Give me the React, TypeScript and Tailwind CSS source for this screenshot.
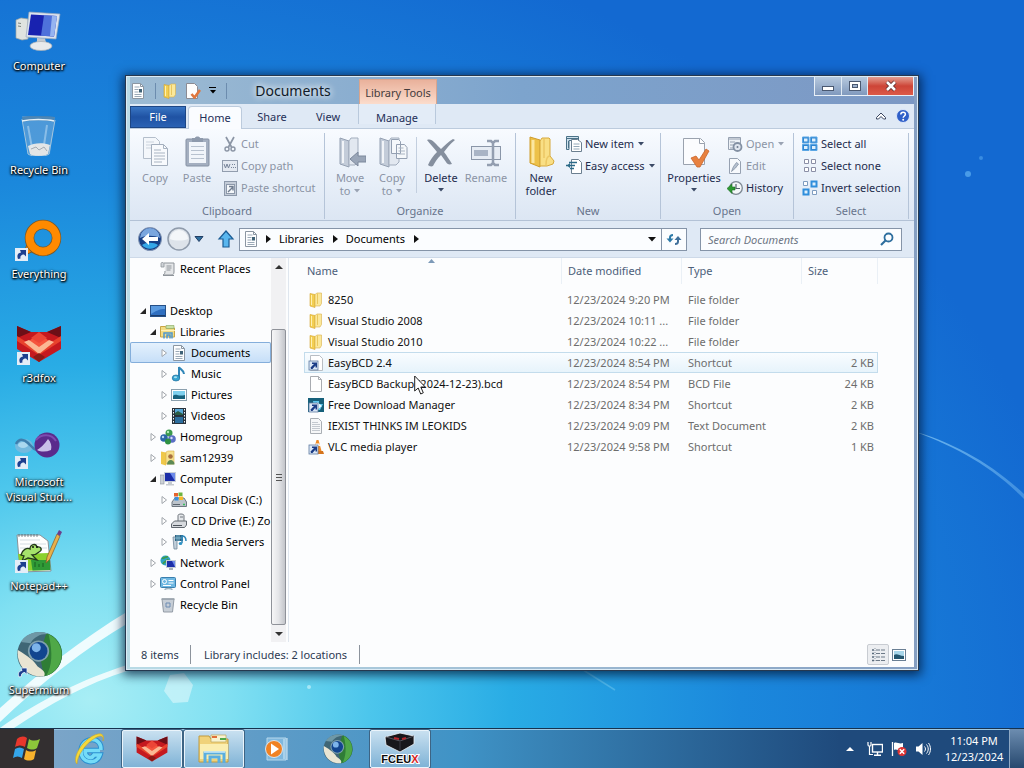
import type { ReactNode } from 'react';

/* ---------- small shared shapes ---------- */

function Svg({ box = 16, className = 'size-4', children }: { box?: number; className?: string; children: ReactNode }) {
  return (
    <svg viewBox={`0 0 ${box} ${box}`} className={`shrink-0 ${className}`} fill="none" aria-hidden="true">
      {children}
    </svg>
  );
}

function Caret({ className = 'text-[#3b4a66]' }: { className?: string }) {
  return (
    <svg viewBox="0 0 6 4" className={`inline-block w-[6px] h-1 shrink-0 ${className}`} aria-hidden="true">
      <path d="M0 0h6L3 3.5z" fill="currentColor" />
    </svg>
  );
}

function RightCaret() {
  return (
    <svg viewBox="0 0 5 8" className="w-[5px] h-2 shrink-0" aria-hidden="true">
      <path d="M0 0l5 4-5 4z" fill="#111" />
    </svg>
  );
}

/* ---------- 16px icons ---------- */

function DocIcon() {
  return (
    <Svg>
      <path d="M2.500.5h8l3 3v12h-11z" fill="#fdfeff" stroke="#8b96a2" />
      <path d="M10.500.5v3h3" stroke="#8b96a2" />
      <path d="M4.500 4h5M4.500 6.500h4M4.500 9h4M4.500 11.500h7M4.500 13.500h7" stroke="#9aa9b7" />
      <rect x="9" y="6" width="3" height="3.500" fill="#3f6277" />
    </Svg>
  );
}

function FolderIcon() {
  return (
    <Svg>
      <path d="M2 1.500l5 1v13l-5-1.500z" fill="#f3cf52" stroke="#d5a52f" strokeWidth=".6" />
      <path d="M7 2.500l2-1.500h4.500v10.500L12 14H7z" fill="#fbe89a" stroke="#d9b04a" strokeWidth=".6" />
      <path d="M9.500 1.500v10.500" stroke="#e9c75f" />
      <path d="M3.500 3v10" stroke="#fff0b0" />
    </Svg>
  );
}

function PageCheckIcon() {
  return (
    <Svg>
      <path d="M1.500.5h8l3 3v12h-11z" fill="#fdfdfd" stroke="#8b8b93" />
      <path d="M6.500 11l3 3.500L15 7" stroke="#e0763c" strokeWidth="2.600" />
    </Svg>
  );
}

function ShortcutBadge() {
  return (
    <>
      <rect x="1" y="6" width="9" height="9" fill="#dbe7f5" stroke="#5f7ba0" strokeWidth=".8" />
      <path d="M3 14l-.500-1.500L6 9H4V7.500h5v5H7.500v-2L4.500 14z" fill="#1b3c86" />
    </>
  );
}

function EasyBcdIcon() {
  return (
    <Svg>
      <path d="M2.500.5h9l3 3v12h-12z" fill="#fff" stroke="#b9bec4" />
      <ShortcutBadge />
    </Svg>
  );
}

function BlankFileIcon() {
  return (
    <Svg>
      <path d="M2.500.5h8l3 3v12h-11z" fill="#fff" stroke="#a9acb1" />
      <path d="M10.500.5v3h3" stroke="#a9acb1" />
    </Svg>
  );
}

function FdmIcon() {
  return (
    <Svg>
      <rect y="1" width="16" height="14" fill="#16607a" />
      <path d="M5 4h6v3h4l-3 6H6z" fill="#5cc7ec" />
      <path d="M9 5l5 4-5 4z" fill="#eafaff" />
      <ShortcutBadge />
    </Svg>
  );
}

function TextFileIcon() {
  return (
    <Svg>
      <path d="M2.500.5h8l3 3v12h-11z" fill="#f6f7f8" stroke="#a9aeb4" />
      <path d="M4 4.500h6M4 6.500h8M4 8.500h8M4 10.500h8M4 12.500h8" stroke="#c4c9cf" />
    </Svg>
  );
}

function VlcIcon() {
  return (
    <Svg>
      <path d="M8.500 1h2l3 11h-8z" fill="#f08a24" />
      <path d="M7.800 4.500h3.500l.8 2.500H7z" fill="#fff" />
      <path d="M4 12h11l1 3H3z" fill="#d5741d" />
      <ShortcutBadge />
    </Svg>
  );
}

function RecentIcon() {
  return (
    <Svg>
      <path d="M4 2h10v9c0 2-1 3-3 3H3c1.500-.5 2-2 2-4" fill="#e4e6e8" stroke="#8e949a" />
      <path d="M1 2.500C1 1 4 1 4 3v3H1z" fill="#cfd3d7" stroke="#8e949a" strokeWidth=".8" />
      <path d="M6.500 5h5M6.500 7h5M6.500 9h4M3 14.500h11" stroke="#8e949a" />
    </Svg>
  );
}

function DesktopIcon() {
  return (
    <Svg>
      <rect x=".5" y="2.500" width="15" height="11" fill="#2f6fc0" stroke="#254f86" />
      <path d="M1 3h14v3c-6 0-9 2-14 5z" fill="#5b9be0" />
      <path d="M1 12.500h14" stroke="#1b3d6d" />
    </Svg>
  );
}

function LibrariesIcon() {
  return (
    <Svg>
      <path d="M.5 2.500h5l1 1.500h8v9H.5z" fill="#f3dc83" stroke="#c9a545" />
      <path d="M6 1.500h8v3H6z" fill="#c8e1a8" stroke="#86a45b" strokeWidth=".6" />
      <path d="M1 6.500h14" stroke="#fff2b8" />
      <path d="M4 14.500V9h8v5.500M7 14.500V11h3v3.500" stroke="#4e97cf" strokeWidth="1.500" />
    </Svg>
  );
}

function MusicIcon() {
  return (
    <Svg>
      <path d="M8 12V1c1 2.500 5 3 5 7" stroke="#2f86b8" strokeWidth="2" />
      <ellipse cx="5" cy="12" rx="3.800" ry="3" fill="#37a3d0" stroke="#1d6f9e" strokeWidth=".7" />
      <ellipse cx="4.500" cy="11.300" rx="1.600" ry="1" fill="#a5e2f4" />
    </Svg>
  );
}

function PictureIcon() {
  return (
    <Svg>
      <rect x=".5" y="2.500" width="15" height="11" fill="#fff" stroke="#8ba0ae" />
      <rect x="2" y="4" width="12" height="8" fill="#7fd0ee" />
      <path d="M2 9c3-3 5 1 12-1v4H2z" fill="#17627d" />
    </Svg>
  );
}

function VideoIcon() {
  return (
    <Svg>
      <rect x="1" width="14" height="16" fill="#28323c" />
      <rect x="4" y="1" width="8" height="6" fill="#58a8d6" />
      <rect x="4" y="9" width="8" height="6" fill="#2d6e9e" />
      <path d="M4 5l3-2 5 3v1H4z" fill="#2b5d45" />
      <path d="M2.500 1v15M13.500 1v15" stroke="#f1f5f8" strokeDasharray="1.500 1.500" />
    </Svg>
  );
}

function HomegroupIcon() {
  return (
    <Svg>
      <circle cx="9" cy="4" r="3.500" fill="#3c9a4e" />
      <circle cx="4" cy="9" r="3.800" fill="#2b66a8" />
      <circle cx="12" cy="10" r="3.800" fill="#5a6fc4" />
      <circle cx="8" cy="12.500" r="3" fill="#2e9142" />
      <circle cx="8" cy="3" r="1.200" fill="#b4ecb8" />
      <circle cx="3" cy="8" r="1.200" fill="#b3d8f4" />
      <circle cx="11.500" cy="9" r="1.200" fill="#d8dcfa" />
    </Svg>
  );
}

function UserIcon() {
  return (
    <Svg>
      <path d="M1 1.500l5 1v13L1 14z" fill="#efc84a" />
      <path d="M6 2l2-1h6v13H6z" fill="#f7e28f" stroke="#d9b04a" strokeWidth=".6" />
      <circle cx="10.500" cy="6.500" r="2.300" fill="#a8703f" />
      <path d="M7 14.500c0-6 7.500-6 7.500 0z" fill="#5d8a54" />
    </Svg>
  );
}

function SmallComputerIcon() {
  return (
    <Svg>
      <rect x="0" y="4" width="4" height="9" fill="#cbd0d6" stroke="#8a929b" strokeWidth=".6" />
      <rect x="4.500" y="1.500" width="11" height="9" fill="#1c2ea8" stroke="#c9d0da" />
      <path d="M10 2h5v8z" fill="#6e8bea" />
      <path d="M8 11h4v2h2v1.500H6V13h2z" fill="#c5cad0" />
    </Svg>
  );
}

function DiskIcon() {
  return (
    <Svg>
      <path d="M1 10l3-4h9l2.500 4v4.500H1z" fill="#bcc3ca" stroke="#6f7881" />
      <rect x="3" y="1" width="4" height="3.500" fill="#e6632d" />
      <rect x="7.500" y=".5" width="4" height="3.500" fill="#6cb33f" />
      <rect x="3.500" y="5" width="4" height="3.500" fill="#3c8fd9" />
      <rect x="8" y="4.500" width="4" height="3.500" fill="#f5b829" />
      <path d="M2 12.500h7" stroke="#5b646d" />
      <path d="M12 12.500h2" stroke="#36c05c" strokeWidth="1.500" />
    </Svg>
  );
}

function CdDriveIcon() {
  return (
    <Svg>
      <path d="M7 9V2.500C7 .5 13 .5 13 2.500V9" fill="#e4e7ea" stroke="#70777e" />
      <path d="M9 4h3" stroke="#70777e" />
      <path d="M.5 11L3.500 8h12v4l-2 2.500H.5z" fill="#d6d9dd" stroke="#61686f" />
      <path d="M2 12.500h9" stroke="#4c535a" />
    </Svg>
  );
}

function MediaServerIcon() {
  return (
    <Svg>
      <path d="M2 3h4v12H3z" fill="#c1cfda" stroke="#72889a" strokeWidth=".8" />
      <path d="M4 1h8v6H4z" fill="#2d6383" />
      <path d="M6 1v6M8 1v6M4 4h8" stroke="#9ed2e6" strokeWidth=".7" />
      <path d="M11 9V2c3 0 4 2 4 5" stroke="#2f86b8" strokeWidth="1.500" />
      <ellipse cx="9.500" cy="9.500" rx="1.800" ry="1.500" fill="#2f93c5" />
    </Svg>
  );
}

function NetworkIcon() {
  return (
    <Svg>
      <circle cx="5.500" cy="5.500" r="5" fill="#2fa3c4" />
      <path d="M2 3c3 1 3-2 6-1M3 9c1-3 4-2 5-5" stroke="#3f9b4a" strokeWidth="1.800" />
      <rect x="6.500" y="5.500" width="9" height="7" fill="#1c2ea8" stroke="#c3ccd6" />
      <path d="M12 6h3v6z" fill="#6e8bea" />
      <path d="M9 13h4v2H9z" fill="#aab2ba" />
    </Svg>
  );
}

function ControlPanelIcon() {
  return (
    <Svg>
      <rect x=".5" y="1.500" width="15" height="10" rx="1" fill="#6fb8e2" stroke="#3a7fae" />
      <circle cx="4.500" cy="5.500" r="2" stroke="#fff" />
      <path d="M8.500 4.500h5M8.500 7h5M3 9.500h8" stroke="#fff" />
      <path d="M5 14c0-2 7-2 7 0" stroke="#9fb4c2" strokeWidth="1.500" />
    </Svg>
  );
}

function SmallBinIcon() {
  return (
    <Svg>
      <path d="M2 2h12l-1.500 13h-9z" fill="#c7ced6" stroke="#939ca6" />
      <path d="M1.500 2h13" stroke="#9aa3ac" strokeWidth="1.500" />
      <path d="M6 6h4v4H6z" stroke="#6c8cb4" />
    </Svg>
  );
}

/* ---------- ribbon icons ---------- */

function CopyIcon() {
  return (
    <Svg box={32} className="size-8">
      <path d="M4.500 1.500h12l4 4v17h-16z" fill="#f4f7fb" stroke="#b4becb" />
      <path d="M7 6h8M7 9h10M7 12h6" stroke="#cbd3dd" />
      <path d="M12.500 8.500h12l4 4v17h-16z" fill="#f8fafd" stroke="#a3aebd" />
      <path d="M24.500 8.500v4h4M15 14h7M15 17h11M15 20h11M15 23h11M15 26h8" stroke="#a9b4c2" />
    </Svg>
  );
}

function PasteIcon() {
  return (
    <Svg box={32} className="size-8">
      <rect x="5" y="3" width="23" height="27" rx="1" fill="#a4afc0" stroke="#8591a4" />
      <rect x="8" y="6" width="17" height="21" fill="#f1f5fa" />
      <path d="M10 10.500h13M10 14.500h13M10 18.500h13M10 22.500h13" stroke="#b8c2cf" />
      <path d="M11 2h3c0-2 5-2 5 0h3v4H11z" fill="#8e9aac" />
    </Svg>
  );
}

function CutIcon() {
  return (
    <Svg>
      <path d="M4 1l5.500 10M12 1L6.500 11" stroke="#8b95a5" strokeWidth="1.700" />
      <circle cx="5" cy="13" r="2" stroke="#8b95a5" strokeWidth="1.400" />
      <circle cx="11" cy="13" r="2" stroke="#8b95a5" strokeWidth="1.400" />
    </Svg>
  );
}

function CopyPathIcon() {
  return (
    <Svg>
      <rect x=".5" y="2.500" width="15" height="11" fill="#e4e9f1" stroke="#929dae" />
      <path d="M2 6l1.500 4L5 6l1.500 4L8 6" stroke="#78859a" />
      <path d="M9 9.500h5M10 6.500h4" stroke="#78859a" strokeDasharray="1 1" />
    </Svg>
  );
}

function PasteShortcutIcon() {
  return (
    <Svg>
      <rect x="2.500" y="1.500" width="12" height="14" fill="#c4ccd8" stroke="#8c98aa" />
      <rect x="4.500" y="4.500" width="8" height="9" fill="#f4f7fa" stroke="#8c98aa" />
      <path d="M6 12l4.500-4.500M7 6.500h4v4" stroke="#6f7c90" strokeWidth="1.400" />
    </Svg>
  );
}

function MoveToIcon() {
  return (
    <Svg box={32} className="size-8">
      <path d="M6 2l9 3v26l-9-3z" fill="#c3ccd9" stroke="#94a0b2" />
      <path d="M15 5l2-3h7v24l-3 3h-6z" fill="#e2e8f0" stroke="#a2adbd" />
      <path d="M9 5v22" stroke="#f1f4f8" strokeWidth="2" />
      <path d="M16 23l8-7v4h8v6h-8v4z" fill="#9aa6b8" stroke="#7d899c" />
    </Svg>
  );
}

function CopyToIcon() {
  return (
    <Svg box={32} className="size-8">
      <path d="M4 2l9 3v26l-9-3z" fill="#c3ccd9" stroke="#94a0b2" />
      <path d="M13 5l2-3h8v24l-3 3h-7z" fill="#e2e8f0" stroke="#a2adbd" />
      <path d="M7 5v22" stroke="#f1f4f8" strokeWidth="2" />
      <path d="M15.500 3.500h7l2 2v12h-9zM20.500 8.500h8l2.500 3v11H20.500z" fill="#f5f8fb" stroke="#94a0b2" />
      <path d="M22.500 12h5M22.500 15h6.500M22.500 18h6.500" stroke="#a9b4c2" />
    </Svg>
  );
}

function DeleteIcon() {
  return (
    <Svg box={32} className="size-8">
      <path d="M2 4c3-1 5 0 7 2 3 3 5 5 7 7 4-4 7-7 12-10l2 1c-5 4-8 8-11 12 3 4 5 7 8 12-3 1-5 0-6-2l-5-7c-4 4-6 7-8 11-2 1-4 0-5-1 2-5 5-9 9-13C9 12 5 8 2 4z" fill="#858f9e" />
    </Svg>
  );
}

function RenameIcon() {
  return (
    <Svg box={32} className="size-8">
      <rect x="1.500" y="10.500" width="29" height="13" fill="#e6ecf4" stroke="#8a96a8" />
      <rect x="4" y="14" width="14" height="6" fill="#a9b4c5" />
      <path d="M17 5h4l2 2 2-2h4M23 7v20M17 29h4l2-2 2 2h4" stroke="#939eb0" strokeWidth="2.500" />
    </Svg>
  );
}

function NewFolderIcon() {
  return (
    <Svg box={32} className="size-8">
      <path d="M5 1l10 3v27L5 27z" fill="#edc149" stroke="#cf9c2c" />
      <path d="M8 4v23" stroke="#fbe6a0" strokeWidth="3" />
      <path d="M15 5l2-3h7l1 1v17l4 5-1 3-6 2h-7z" fill="#f9df85" stroke="#d6a83c" />
      <path d="M19 3v19M25 20c-3 0-4 3-4 9" stroke="#ecc865" strokeWidth="1.500" />
    </Svg>
  );
}

function NewItemIcon() {
  return (
    <Svg>
      <path d="M.5.500h12v4H3v9H.5z" fill="#cfe2ee" stroke="#4a7288" />
      <path d="M1 2.500h11M2.500 5v7" stroke="#4a7288" />
      <path d="M5.500 3.500h6l4 3v9h-10z" fill="#fff" stroke="#6b7f90" />
      <path d="M7.500 8h6M7.500 10.500h6M7.500 13h6" stroke="#93a8b8" />
    </Svg>
  );
}

function EasyAccessIcon() {
  return (
    <Svg>
      <path d="M5.500 1.500h7l3 3v11h-10z" fill="#fff" stroke="#6b7f90" />
      <path d="M0 7.500h9M3 4.500h8M4 10.500h4" stroke="#2c6b88" strokeWidth="1.300" />
      <path d="M1 7.500l3-2.500v5z" fill="#2c6b88" />
    </Svg>
  );
}

function PropertiesIcon() {
  return (
    <Svg box={32} className="size-8">
      <path d="M5.500 2.500h17l4 4v22h-21z" fill="#fbfcfe" stroke="#9aa2ae" />
      <path d="M21.500 2.500v5h5" fill="#fff" stroke="#9aa2ae" />
      <path d="M13 22l5-2 3 4 7-11 3 2-9 16h-3z" fill="#e8813f" stroke="#c9642a" strokeWidth=".8" />
    </Svg>
  );
}

function OpenIcon() {
  return (
    <Svg>
      <path d="M1.500 1.500h12v12h-12z" fill="#edf1f6" stroke="#96a1b1" />
      <path d="M1 3h13M3 6h5M3 9h4M3 12h4" stroke="#96a1b1" />
      <circle cx="10.500" cy="11" r="4" fill="#dfe5ee" stroke="#8390a3" strokeWidth="1.800" />
      <circle cx="10.500" cy="11" r="1" fill="#6e7b8e" />
    </Svg>
  );
}

function EditIcon() {
  return (
    <Svg>
      <path d="M2.500.5h8l3 3v12h-11z" fill="#f7f9fc" stroke="#96a1b1" />
      <path d="M4.500 13.500l2-5 3-4 2 1.500-3 4z" fill="#b8c2d0" stroke="#8390a3" strokeWidth=".8" />
    </Svg>
  );
}

function HistoryIcon() {
  return (
    <Svg>
      <circle cx="9" cy="8" r="6.300" fill="#f4f7f9" stroke="#7d8893" strokeWidth="1.300" />
      <path d="M9 4v4.500h4" stroke="#55606c" strokeWidth="1.200" />
      <path d="M0 8.500L5 4v3h3v3H5v3.500z" fill="#2e9a33" stroke="#1c6d22" strokeWidth=".6" />
    </Svg>
  );
}

function SelectAllIcon() {
  return (
    <Svg>
      <path d="M.5 1h6.500v6H.5zM8.500 1H15v6H8.500zM.5 8.500H7v6H.5zM8.500 8.500H15v6H8.500z" fill="#2f86d2" stroke="#5ba6e4" />
      <path d="M2 2.500h3.500v3H2zM10 2.500h3.500v3H10zM2 10h3.500v3H2zM10 10h3.500v3H10z" fill="#dff0fc" />
    </Svg>
  );
}

function SelectNoneIcon() {
  return (
    <Svg>
      <path d="M2.500 1.500h4v4h-4zM9.500 1.500h4v4h-4zM2.500 9.500h4v4h-4zM9.500 9.500h4v4h-4z" fill="#fff" stroke="#8b8fa6" />
    </Svg>
  );
}

function InvertIcon() {
  return (
    <Svg>
      <path d="M1.500 1.500h4v4h-4zM10.500 10.500h4v4h-4z" fill="#fff" stroke="#7f9cc0" />
      <path d="M8.500.5h7v7h-7zM.5 8.500h7v7h-7z" fill="#2f8edc" />
      <path d="M10.500 2.500h3v3h-3zM2.500 10.500h3v3h-3z" fill="#dff0fc" />
    </Svg>
  );
}

/* ---------- big desktop icons ---------- */

function BigShortcut() {
  return (
    <>
      <rect x="-4" y="28" width="13" height="13" fill="#e4edf7" />
      <path d="M-1 39c-1.500-4 0-6 3-6.500L1 30l6 0 0 6.500-2-2c-3 0-4 2-3.500 4z" fill="#1d3f8f" />
    </>
  );
}

function ComputerBig() {
  return (
    <Svg box={40} className="size-10 overflow-visible">
      <path d="M-3 8l5-2 7 1v20l-6 1-6-2z" fill="#dfe3e0" stroke="#9fa6a3" strokeWidth=".7" />
      <path d="M-1 11l3 .5M-1 14l3 .5" stroke="#7b8580" />
      <path d="M10 0l31 2-4 25-30-2z" fill="#dbe3ee" stroke="#98a6ba" strokeWidth=".7" />
      <path d="M12 2.500l26 1.500-3 20.500-26-1.500z" fill="#1822b0" />
      <path d="M25 3.300L38 4l-3 20.500-13-.8z" fill="#5c86e6" opacity=".8" />
      <path d="M33 4l5 .2-3 20-4-.3z" fill="#b5d2fa" opacity=".7" />
      <path d="M18 26l8 .5 1 4h-9z" fill="#c2c8cf" />
      <ellipse cx="22" cy="34" rx="11" ry="4.500" fill="#e8eaec" stroke="#a7adb3" strokeWidth=".7" />
    </Svg>
  );
}

function BinBig() {
  return (
    <Svg box={40} className="size-10">
      <path d="M3 0L9 38c4 3 18 3 22 0l5-37z" fill="#8fb6d6" opacity=".45" />
      <path d="M9 30c5-3 15-4 22-1l-2 9c-5 3-14 3-18 0z" fill="#e3e5e6" />
      <path d="M12 33l5-2 3 3 5-3 3 4" stroke="#a4abb2" />
      <path d="M3 3l6 35c4 3 17 3 21 0l6-34" stroke="#a5c6dd" />
      <path d="M3 1c9-2 23-2 33 0-1 3-1 4-1 5C26 4 12 4 4 6z" fill="#4f7fa6" fillOpacity=".7" />
      <path d="M3 5c9-2 24-2 32 0" stroke="#e6f2fa" strokeWidth="1.500" />
      <path d="M9 10l4 22M28 9l-3 20" stroke="#e4f3fd" opacity=".4" strokeWidth="2" />
    </Svg>
  );
}

function EverythingBig() {
  return (
    <Svg box={40} className="size-10 overflow-visible">
      <path d="M8 24l-4 12 11-5z" fill="#ff8a00" stroke="#7b5a2a" />
      <circle cx="24" cy="18" r="13.500" stroke="#7b5a2a" strokeWidth="9.500" />
      <circle cx="24" cy="18" r="13.500" stroke="#ff8a00" strokeWidth="8" />
      <BigShortcut />
    </Svg>
  );
}

function FoxShape() {
  return (
    <>
      <path d="M0 2l14 6h16l14-6v23L22 38 0 25z" fill="#c5191f" />
      <path d="M0 2l14 6L0 14zM44 2L30 8l14 6z" fill="#6d0f17" />
      <path d="M0 12l22 14 22-14v5L22 31 0 17z" fill="#e8422c" />
      <path d="M12 17l10-8 10 8-10 9z" fill="#f5543d" />
      <path d="M7 18l5-2 10 7 10-7 5 2-15 12z" fill="#fbb894" />
      <path d="M14 14l8-6 8 6-8 5z" fill="#ec4537" />
      <path d="M16 33l6-4 6 4-6 5z" fill="#8c1a16" />
    </>
  );
}

function FoxBig() {
  return (
    <svg viewBox="-2 0 48 40" className="w-12 h-10 overflow-visible" fill="none" aria-hidden="true">
      <FoxShape />
      <g transform="translate(4 0)">
        <BigShortcut />
      </g>
    </svg>
  );
}

function VsBig() {
  return (
    <Svg box={40} className="size-10 overflow-visible">
      <ellipse cx="5" cy="18" rx="9" ry="7" fill="#7cb9dd" opacity=".85" />
      <ellipse cx="4" cy="17" rx="5" ry="3" fill="#b8e0f2" opacity=".8" />
      <path d="M-3 16c3-6 8-5 12-1s7 8 11 7" stroke="#3e7fae" strokeWidth="2.500" />
      <circle cx="28" cy="17" r="12.500" fill="#5a2b8c" />
      <path d="M18 22c3-2 8-6 11-11 3 3 4 7 3 11-5 2-10 2-14 0z" fill="#c9bfe8" />
      <path d="M17 12c5-6 15-7 20 1" stroke="#7d4cb0" strokeWidth="2" />
      <BigShortcut />
    </Svg>
  );
}

function NotepadBig() {
  return (
    <Svg box={40} className="size-10 overflow-visible">
      <path d="M-2 3h23l8 6 3 30-31 1z" fill="#fff" stroke="#8a9298" />
      <path d="M1 8h20M1 12h26M1 16h27" stroke="#d5dde3" />
      <path d="M0 2v3M3 2v3M6 2v3M9 2v3M12 2v3M15 2v3M18 2v3" stroke="#555d64" strokeWidth=".7" />
      <path d="M-1 22l31-1 1 17-29 1z" fill="#8bd12d" />
      <path d="M12 28h19l.5 10-18 .6z" fill="#2f9a36" />
      <path d="M2 23c1-5 6-8 9-6 0-5 6-6 7-2 4-1 6 3 2 5-2 2-4 3-7 3l5 5-9-2-6 3 2-5z" fill="#a6e36b" stroke="#253a1c" strokeWidth="1.300" />
      <circle cx="14" cy="15" r="1" fill="#111" />
      <circle cx="18" cy="15" r="1" fill="#111" />
      <path d="M16 35v-5M20 35v-3M24 35v-4" stroke="#195f20" />
      <path d="M38 2l3 2-10 23-4 4 1-6z" fill="#e8b04a" stroke="#8b5a25" strokeWidth=".7" />
      <path d="M38 2l2-4 3 2-2 4z" fill="#6b3f8c" />
      <BigShortcut />
    </Svg>
  );
}

function ChromiumShape() {
  return (
    <>
      <circle cx="22" cy="20" r="20" fill="#3f6675" />
      <path d="M22 20L28 .9A20 20 0 0 1 26 39.600z" fill="#2f7d36" />
      <path d="M30 2a20 20 0 0 1-2 37c5-9 6-20 2-37z" fill="#4fa848" />
      <path d="M2.500 16C1 30 12 41 26 39.600c2-4-2-6-6-9-3-5-8-9-17.500-14.600z" fill="#e9e5d3" />
      <path d="M5 9C11 0 22-2 31 2c-7-1-14 2-17 8z" fill="#6f98a6" />
      <circle cx="21" cy="17" r="9.500" fill="#7fa0ae" />
      <circle cx="21" cy="17" r="8" fill="#12458f" />
      <circle cx="19" cy="14" r="4" fill="#7db4ea" />
    </>
  );
}

function SupermiumBig() {
  return (
    <svg viewBox="-4 0 48 40" className="w-12 h-10 overflow-visible" fill="none" aria-hidden="true">
      <g transform="translate(-4 -4) scale(1.120)">
        <ChromiumShape />
      </g>
      <path d="M0 41c-1.500-4 0-6 3-6.500L2 32l6 0 0 6.500-2-2c-3 0-4 2-3.500 4z" fill="#1d3f8f" stroke="#eef4fb" strokeWidth=".8" />
    </svg>
  );
}

/* ---------- taskbar icons ---------- */

function StartLogo() {
  return (
    <Svg box={32} className="size-8">
      <path d="M6 6c4-3 7-3 10-1l-2 9c-3-2-6-2-10 0z" fill="#e8372c" />
      <path d="M18 6c3 2 7 2 11 0l-3 9c-3 2-6 2-10 0z" fill="#8cc63a" />
      <path d="M4 16c3-2 6-2 9 0l-2 9c-3-2-6-2-9 0z" fill="#35a6ea" />
      <path d="M15 17c3 2 7 2 10 0l-2 9c-3 2-7 2-10 0z" fill="#f8b22c" />
    </Svg>
  );
}

function IeLogo() {
  return (
    <Svg box={32} className="size-8">
      <path d="M26 17.500H9.500M27 17c1-14-19-14-20 1 0 13 16 14 19 4h-6c-3 5-9 2-9-4" stroke="#2b8fd0" strokeWidth="5.500" />
      <path d="M26 17.500H9.500M27 17c1-14-19-14-20 1 0 13 16 14 19 4h-6c-3 5-9 2-9-4" stroke="#74dbf7" strokeWidth="3.500" />
      <path d="M3 31C-3 25 10 4 24 1c6-1 6 4 5 7 1-6-3-6-8-3C11 11 3 23 3 31z" fill="#f5d93a" stroke="#caa52a" strokeWidth=".6" />
    </Svg>
  );
}

function FoxTask() {
  return (
    <svg viewBox="0 0 44 40" className="w-8 h-7" fill="none" aria-hidden="true">
      <FoxShape />
    </svg>
  );
}

function ExplorerTask() {
  return (
    <Svg box={32} className="size-8">
      <path d="M1 3h10l2 3h17v23H1z" fill="#f0d27a" stroke="#bf9a3f" />
      <path d="M13 2h15v7H13z" fill="#f8f3d0" stroke="#bfa757" strokeWidth=".7" />
      <path d="M14 4h5" stroke="#e0703a" strokeWidth="2" />
      <path d="M22 6h6" stroke="#4fa848" strokeWidth="2" />
      <path d="M2 11h28v15H2z" fill="#fbeeb0" />
      <path d="M7 30V20h19v10M12 30v-6h9v6" stroke="#5aaee0" strokeWidth="3" />
      <path d="M6 19h21" stroke="#cbeafa" strokeWidth="1.500" />
    </Svg>
  );
}

function PlayerTask() {
  return (
    <Svg box={32} className="size-8">
      <path d="M7 5h19v22H7z" fill="#7fb8de" stroke="#b7d8ec" />
      <path d="M24 6v20M27 5v22" stroke="#d5eaf7" />
      <circle cx="14" cy="16" r="8.500" fill="#f08223" stroke="#d9e6f0" />
      <path d="M11 10.500l8 5.500-8 5.500z" fill="#fff" />
    </Svg>
  );
}

function SupermiumTask() {
  return (
    <svg viewBox="0 -1 44 42" className="w-8 h-8" fill="none" aria-hidden="true">
      <ChromiumShape />
    </svg>
  );
}

function FceuxTask() {
  return (
    <svg viewBox="0 0 40 34" className="w-10 h-[34px]" aria-hidden="true">
      <path d="M5 5l15-4 14 3v8l-14 8-14-7z" fill="#17171b" stroke="#eef3f7" strokeWidth=".8" />
      <path d="M6 5l14 4 14-5" stroke="#55555d" fill="none" />
      <path d="M14 6l5 1M22 7l4-1" stroke="#b3262b" strokeWidth="2" />
      <path d="M20 10v8" stroke="#3b3b42" />
      <text x="20" y="31" textAnchor="middle" fontFamily="Liberation Sans, sans-serif" fontWeight="700" fontSize="11" fill="#0b0b0b" stroke="#fff" strokeWidth="2" paintOrder="stroke">
        FCEU<tspan fill="#d81f1f">X</tspan>
      </text>
    </svg>
  );
}

/* ---------- data ---------- */

const desktopItems = [
  { label: 'Computer', icon: <ComputerBig /> },
  { label: 'Recycle Bin', icon: <BinBig /> },
  { label: 'Everything', icon: <EverythingBig /> },
  { label: 'r3dfox', icon: <FoxBig /> },
  { label: 'Microsoft Visual Stud...', icon: <VsBig /> },
  { label: 'Notepad++', icon: <NotepadBig /> },
  { label: 'Supermium', icon: <SupermiumBig /> },
];

type NavItem = { label: string; level: 0 | 1 | 2; arrow?: 'open' | 'closed'; icon: ReactNode; selected?: boolean };

const navItems: NavItem[] = [
  { label: 'Desktop', level: 0, arrow: 'open', icon: <DesktopIcon /> },
  { label: 'Libraries', level: 1, arrow: 'open', icon: <LibrariesIcon /> },
  { label: 'Documents', level: 2, arrow: 'closed', icon: <DocIcon />, selected: true },
  { label: 'Music', level: 2, arrow: 'closed', icon: <MusicIcon /> },
  { label: 'Pictures', level: 2, arrow: 'closed', icon: <PictureIcon /> },
  { label: 'Videos', level: 2, arrow: 'closed', icon: <VideoIcon /> },
  { label: 'Homegroup', level: 1, arrow: 'closed', icon: <HomegroupIcon /> },
  { label: 'sam12939', level: 1, arrow: 'closed', icon: <UserIcon /> },
  { label: 'Computer', level: 1, arrow: 'open', icon: <SmallComputerIcon /> },
  { label: 'Local Disk (C:)', level: 2, arrow: 'closed', icon: <DiskIcon /> },
  { label: 'CD Drive (E:) Zo', level: 2, arrow: 'closed', icon: <CdDriveIcon /> },
  { label: 'Media Servers', level: 2, arrow: 'closed', icon: <MediaServerIcon /> },
  { label: 'Network', level: 1, arrow: 'closed', icon: <NetworkIcon /> },
  { label: 'Control Panel', level: 1, arrow: 'closed', icon: <ControlPanelIcon /> },
  { label: 'Recycle Bin', level: 1, icon: <SmallBinIcon /> },
];

const files = [
  { name: '8250', date: '12/23/2024 9:20 PM', type: 'File folder', size: '', icon: <FolderIcon /> },
  { name: 'Visual Studio 2008', date: '12/23/2024 10:11 ...', type: 'File folder', size: '', icon: <FolderIcon /> },
  { name: 'Visual Studio 2010', date: '12/23/2024 10:22 ...', type: 'File folder', size: '', icon: <FolderIcon /> },
  { name: 'EasyBCD 2.4', date: '12/23/2024 8:54 PM', type: 'Shortcut', size: '2 KB', icon: <EasyBcdIcon />, hover: true },
  { name: 'EasyBCD Backup (2024-12-23).bcd', date: '12/23/2024 8:54 PM', type: 'BCD File', size: '24 KB', icon: <BlankFileIcon /> },
  { name: 'Free Download Manager', date: '12/23/2024 8:34 PM', type: 'Shortcut', size: '2 KB', icon: <FdmIcon /> },
  { name: 'IEXIST THINKS IM LEOKIDS', date: '12/23/2024 9:09 PM', type: 'Text Document', size: '2 KB', icon: <TextFileIcon /> },
  { name: 'VLC media player', date: '12/23/2024 9:58 PM', type: 'Shortcut', size: '1 KB', icon: <VlcIcon /> },
];

const indent = ['pl-[9px]', 'pl-[19px]', 'pl-[30px]'];

/* ---------- wallpaper and desktop ---------- */

function Wallpaper() {
  return (
    <svg viewBox="0 0 1024 728" preserveAspectRatio="none" className="absolute inset-0 w-full h-full" aria-hidden="true">
      <defs>
        <radialGradient id="sky" gradientUnits="userSpaceOnUse" cx="0" cy="0" r="1" gradientTransform="translate(90 700) scale(1000 800)">
          <stop offset="0" stopColor="#a8eef5" />
          <stop offset=".14" stopColor="#80e0f2" />
          <stop offset=".28" stopColor="#4cc6ec" />
          <stop offset=".42" stopColor="#29ace5" />
          <stop offset=".65" stopColor="#1b88dc" />
          <stop offset="1" stopColor="#1369d1" />
        </radialGradient>
        <linearGradient id="trail" x1="0" x2="1">
          <stop offset="0" stopColor="#6fb8f0" />
          <stop offset="1" stopColor="#3f8fe0" />
        </linearGradient>
      </defs>
      <rect width="1024" height="728" fill="url(#sky)" />
      <path d="M0 708C40 672 80 640 130 610v12C85 648 40 684 0 722z" fill="#fff" opacity=".85" />
      <path d="M0 728C40 700 80 680 130 664v6C85 684 50 704 14 728z" fill="#fff" opacity=".8" />
      <path d="M170 675l14-2 9 12-5 17-15 1-9-12z" fill="#dff8fb" opacity=".6" />
      <path d="M910 430c40 14 80 34 114 69v-5c-34-32-72-52-114-64z" fill="url(#trail)" />
      <path d="M580 668l35 22" stroke="#64c2ee" strokeWidth="1.500" opacity=".6" />
      <circle cx="968" cy="174" r="3" fill="#5fb0f2" opacity=".7" />
      <circle cx="981" cy="158" r="2" fill="#5fb0f2" opacity=".5" />
      <circle cx="309" cy="687" r="2" fill="#b8effa" opacity=".8" />
    </svg>
  );
}

function DesktopIcons() {
  return (
    <ul className="relative grid auto-rows-[104px] w-[78px]">
      {desktopItems.map((item) => (
        <li key={item.label}>
          <button className="flex flex-col items-center w-full pt-3 gap-[6px] text-white text-[11px] leading-[15px] [text-shadow:0_1px_2px_#000,1px_1px_2px_#000,0_0_3px_#000]">
            {item.icon}
            <span>{item.label}</span>
          </button>
        </li>
      ))}
    </ul>
  );
}

/* ---------- window parts ---------- */

function TitleBar() {
  return (
    <div className="flex h-[27px] items-stretch bg-linear-to-r from-[#9dbbd3] via-[#7da4cd] to-[#7c98c4]">
      <div className="flex items-center w-[97px]">
        <DocIcon />
        <span className="w-px h-4 bg-[#6c8cae] ml-[9px] mr-[6px]" />
        <button aria-label="New folder"><FolderIcon /></button>
        <button aria-label="Properties" className="ml-[7px]"><PageCheckIcon /></button>
        <button aria-label="Customize toolbar" className="ml-2 flex flex-col items-center gap-[2px]">
          <span className="w-[7px] h-px bg-black" />
          <Caret className="text-black" />
        </button>
        <span className="w-px h-4 bg-[#6c8cae] ml-auto" />
      </div>
      <h1 className="w-[132px] text-center text-[14px] leading-[27px] text-[#101a28] [text-shadow:0_0_8px_#fff,0_0_6px_#fff]">Documents</h1>
      <div className="w-[78px] mt-[2px] text-center text-[11px] leading-[26px] text-[#453c3c] border border-b-0 border-[#d9a58d] bg-linear-to-b from-[#e9b19b] to-[#fbdccc]">
        Library Tools
      </div>
      <div className="flex ml-auto h-[19px] border border-t-0 border-[#e8f0f8]">
        <button aria-label="Minimize" className="w-[27px] flex items-center justify-center border-r border-[#dfe9f3] bg-linear-to-b from-[#b7c9de] to-[#8099bd]">
          <span className="mt-1 w-3 h-[5px] bg-white border border-[#4a5870]" />
        </button>
        <button aria-label="Maximize" className="w-[26px] flex items-center justify-center border-r border-[#dfe9f3] bg-linear-to-b from-[#b7c9de] to-[#8099bd]">
          <span className="w-3 h-[10px] border border-[#4a5870] bg-white p-[2px]">
            <span className="block h-full border border-[#4a5870] bg-[#9fb3cf]" />
          </span>
        </button>
        <button aria-label="Close" className="w-[45px] flex items-center justify-center bg-linear-to-b from-[#e29c90] via-[#cd4437] to-[#dc5a48]">
          <Svg box={12} className="size-3">
            <path d="M2 2l8 8M10 2l-8 8" stroke="#5a2a2a" strokeWidth="4.200" />
            <path d="M2 2l8 8M10 2l-8 8" stroke="#fff" strokeWidth="2.600" />
          </Svg>
        </button>
      </div>
    </div>
  );
}

function RibbonTabs() {
  return (
    <div className="flex items-end h-[25px] bg-[#dfe9f5] border-b border-[#bccbdd] text-[11px] leading-4 text-[#1e2f57]">
      <button className="w-14 h-[22px] bg-linear-to-b from-[#3a76c4] via-[#1f52a3] to-[#2b62b4] border border-[#1d4685] text-white">File</button>
      <button className="w-[54px] h-[23px] ml-[2px] -mb-px bg-[#fafcff] border border-b-0 border-[#bccbdd] rounded-t-sm">Home</button>
      <button className="w-[60px] h-[22px]">Share</button>
      <button className="w-[52px] h-[22px]">View</button>
      <button className="w-[78px] ml-1 self-stretch mb-1 pt-[6px] bg-[#e3ecf7] border-x border-[#b9c9dc]">Manage</button>
      <div className="ml-auto flex items-center gap-[9px] self-center pr-1">
        <button aria-label="Minimize the Ribbon">
          <Svg box={12} className="size-3">
            <path d="M1.500 7.500L6 3l4.500 4.500V9H8.500L6 6.500 3.500 9h-2z" fill="#fff" stroke="#3a4660" />
          </Svg>
        </button>
        <button aria-label="Help">
          <Svg box={14} className="size-[14px]">
            <circle cx="7" cy="7" r="6.500" fill="#2f5fc8" stroke="#dbe6fa" />
            <path d="M4.800 5.500c0-3 4.600-3 4.600-.3C9.400 7 7.200 7 7.200 8.800" stroke="#fff" strokeWidth="1.500" />
            <circle cx="7.200" cy="10.700" r="1" fill="#fff" />
          </Svg>
        </button>
      </div>
    </div>
  );
}

function Group({ label, className, children }: { label: string; className: string; children: ReactNode }) {
  return (
    <section aria-label={label} className={`flex flex-col shrink-0 ${className}`}>
      <div className="flex h-[70px] px-1 border-r border-[#b5c4d8]">{children}</div>
      <div className="h-4 border-r border-[#b5c4d8] text-center leading-4 text-[#67748c]">{label}</div>
    </section>
  );
}

function BigButton({ icon, label, className = 'w-[42px]', disabled, caret }: { icon: ReactNode; label: string; className?: string; disabled?: boolean; caret?: 'inline' | 'below' }) {
  return (
    <button disabled={disabled} className={`flex flex-col items-center shrink-0 pt-[3px] leading-[13px] disabled:text-[#8b94a5] ${className}`}>
      {icon}
      <span className="mt-[3px] flex flex-col items-center text-center">
        {label.split('\n').map((line, i) => (
          <span key={line} className="flex items-center gap-1">
            {line}
            {caret === 'inline' && i === 1 && <Caret className="text-[#9aa3b3]" />}
          </span>
        ))}
        {caret === 'below' && <Caret className="mt-1 text-[#3b4a66]" />}
      </span>
    </button>
  );
}

function SmallButton({ icon, label, disabled, caret }: { icon: ReactNode; label: string; disabled?: boolean; caret?: boolean }) {
  return (
    <button disabled={disabled} className="flex items-center h-[22px] pl-1 gap-[3px] whitespace-nowrap disabled:text-[#8b94a5]">
      {icon}
      <span>{label}</span>
      {caret && <Caret className={disabled ? 'ml-px text-[#9aa3b3]' : 'ml-px text-[#3b4a66]'} />}
    </button>
  );
}

function Ribbon() {
  return (
    <div className="flex h-[92px] pt-1 border-b border-[#b3c2d6] bg-linear-to-b from-[#f8fbff] via-[#e9f0f9] to-[#dce6f3] text-[11px] text-[#1e2c4d]">
      <Group label="Clipboard" className="w-[195px]">
        <BigButton icon={<CopyIcon />} label="Copy" disabled />
        <BigButton icon={<PasteIcon />} label="Paste" disabled />
        <div className="flex flex-col">
          <SmallButton icon={<CutIcon />} label="Cut" disabled />
          <SmallButton icon={<CopyPathIcon />} label="Copy path" disabled />
          <SmallButton icon={<PasteShortcutIcon />} label="Paste shortcut" disabled />
        </div>
      </Group>
      <Group label="Organize" className="w-[191px]">
        <BigButton icon={<MoveToIcon />} label={'Move\nto'} caret="inline" disabled />
        <BigButton icon={<CopyToIcon />} label={'Copy\nto'} caret="inline" disabled />
        <span className="w-px mx-[3px] mt-1 h-14 bg-[#c3cfdf]" />
        <BigButton icon={<DeleteIcon />} label="Delete" caret="below" />
        <BigButton icon={<RenameIcon />} label="Rename" className="w-12" disabled />
      </Group>
      <Group label="New" className="w-[145px]">
        <BigButton icon={<NewFolderIcon />} label={'New\nfolder'} />
        <div className="flex flex-col">
          <SmallButton icon={<NewItemIcon />} label="New item" caret />
          <SmallButton icon={<EasyAccessIcon />} label="Easy access" caret />
        </div>
      </Group>
      <Group label="Open" className="w-[133px]">
        <BigButton icon={<PropertiesIcon />} label="Properties" className="w-[58px]" caret="below" />
        <div className="flex flex-col">
          <SmallButton icon={<OpenIcon />} label="Open" caret disabled />
          <SmallButton icon={<EditIcon />} label="Edit" disabled />
          <SmallButton icon={<HistoryIcon />} label="History" />
        </div>
      </Group>
      <Group label="Select" className="w-[115px]">
        <div className="flex flex-col">
          <SmallButton icon={<SelectAllIcon />} label="Select all" />
          <SmallButton icon={<SelectNoneIcon />} label="Select none" />
          <SmallButton icon={<InvertIcon />} label="Invert selection" />
        </div>
      </Group>
    </div>
  );
}

function AddressRow() {
  return (
    <div className="flex items-center h-[37px] pl-2 pr-3 bg-[#dfe9f5] border-b border-[#cdd9e8] text-[11px]">
      <button aria-label="Back">
        <Svg box={24} className="size-6">
          <circle cx="12" cy="12" r="11.500" fill="#163f86" stroke="#8798b4" />
          <path d="M2 11a10 10 0 0 1 20 0c-6-3-14-3-20 0z" fill="#7aa6de" />
          <path d="M4 18c4 5 12 5 16 0-4-3-12-3-16 0z" fill="#35a7e8" />
          <path d="M4 12l7-6v4h9v4h-9v4z" fill="#fff" />
        </Svg>
      </button>
      <button aria-label="Forward" className="ml-[5px]">
        <Svg box={24} className="size-6">
          <circle cx="12" cy="12" r="11" fill="#dde3ea" stroke="#8f9bab" strokeWidth="1.500" />
          <path d="M3 12a9 9 0 0 1 18 0c-5 2-13 2-18 0z" fill="#f3f6f9" />
        </Svg>
      </button>
      <button aria-label="Recent locations" className="ml-[3px] flex">
        <Svg box={10} className="size-[10px]">
          <path d="M1 2.500h8L5 7.500z" fill="#2d6e9e" stroke="#223f66" />
        </Svg>
      </button>
      <button aria-label="Up" className="ml-[13px]">
        <Svg box={18} className="size-[18px]">
          <path d="M9 1l7 8h-4v8H6V9H2z" fill="#59b6ee" stroke="#1b5c94" strokeWidth="1.200" />
        </Svg>
      </button>
      <nav aria-label="Address" className="ml-1 flex flex-1 items-center h-[23px] bg-[#fbfdff] border border-[#8594a8] pl-[3px]">
        <DocIcon />
        <span className="ml-[7px]"><RightCaret /></span>
        <button className="ml-2">Libraries</button>
        <span className="ml-[9px]"><RightCaret /></span>
        <button className="ml-2">Documents</button>
        <span className="ml-[9px]"><RightCaret /></span>
        <button aria-label="Previous locations" className="ml-auto mr-[5px] flex">
          <Svg box={8} className="size-2"><path d="M0 2h8L4 6.500z" fill="#111" /></Svg>
        </button>
        <button aria-label="Refresh" className="flex items-center justify-center w-[25px] h-full border-l border-[#8594a8]">
          <Svg>
            <path d="M4 9V6.500C4 5 5 4 7 4" stroke="#2d7aa8" strokeWidth="2" />
            <path d="M.5 7.500h7L4 11.500z" fill="#2d7aa8" />
            <path d="M12 8v2.500c0 1.500-1 2.500-3 2.500" stroke="#3f6f9a" strokeWidth="2" />
            <path d="M8.500 9h7L12 5z" fill="#3f6f9a" />
          </Svg>
        </button>
      </nav>
      <label className="ml-[13px] flex items-center w-[202px] h-[23px] bg-[#fbfdff] border border-[#8594a8] px-[7px]">
        <span className="sr-only">Search Documents</span>
        <input type="text" placeholder="Search Documents" className="flex-1 min-w-0 h-full bg-transparent outline-none placeholder:italic placeholder:text-[#6d7684]" />
        <Svg box={14} className="size-[14px]">
          <circle cx="8.500" cy="5.500" r="4" stroke="#2d6e9e" strokeWidth="1.800" />
          <path d="M5.500 8.500l-4.500 4.500" stroke="#2d6e9e" strokeWidth="2.200" />
        </Svg>
      </label>
    </div>
  );
}

function NavRow({ item }: { item: NavItem }) {
  return (
    <button
      className={`flex items-center w-full h-[21px] gap-[2px] whitespace-nowrap ${indent[item.level]} ${
        item.selected ? 'rounded-xs bg-linear-to-b from-[#e6f2fd] to-[#c5def8] inset-ring inset-ring-[#84aedb]' : ''
      }`}
    >
      <span className="w-[9px] shrink-0">
        {item.arrow === 'open' && (
          <Svg box={8} className="size-2"><path d="M7 1v6H1z" fill="#262626" /></Svg>
        )}
        {item.arrow === 'closed' && (
          <Svg box={8} className="size-2"><path d="M2 .5l4.500 3.500L2 7.500z" fill="#fff" stroke="#a0a5ab" /></Svg>
        )}
      </span>
      {item.icon}
      <span className="ml-[2px]">{item.label}</span>
    </button>
  );
}

function NavPane() {
  return (
    <aside className="flex w-[159px] shrink-0 border-r border-[#dfe6ee]">
      <div className="w-[141px] overflow-hidden text-[11px] leading-4">
        <NavRow item={{ label: 'Recent Places', level: 1, icon: <RecentIcon /> }} />
        <div className="mt-[21px]">
          {navItems.map((item) => (
            <NavRow key={item.label + item.level} item={item} />
          ))}
        </div>
      </div>
      <div className="flex flex-col w-[15px] bg-[#f1f1f3]">
        <button aria-label="Scroll up" className="h-[17px] flex items-center justify-center">
          <Svg box={8} className="size-2"><path d="M0 6h8L4 2z" fill="#333" /></Svg>
        </button>
        <div className="flex-1 flex pt-[54px]">
          <div className="flex-1 flex flex-col items-center justify-center gap-[2px] rounded-xs border border-[#8f9299] bg-linear-to-r from-[#f6f6f7] via-[#e4e5e8] to-[#c3c5ca]">
            <span className="w-[6px] h-px bg-[#555]" />
            <span className="w-[6px] h-px bg-[#555]" />
            <span className="w-[6px] h-px bg-[#555]" />
          </div>
        </div>
        <button aria-label="Scroll down" className="h-[17px] flex items-center justify-center">
          <Svg box={8} className="size-2"><path d="M0 2h8L4 6z" fill="#333" /></Svg>
        </button>
      </div>
    </aside>
  );
}

function FileList() {
  return (
    <div className="flex-1 pl-[15px] overflow-hidden">
      <table className="w-[574px] table-fixed border-collapse text-[11px] leading-4">
        <colgroup>
          <col className="w-[258px]" />
          <col className="w-[120px]" />
          <col className="w-[120px]" />
          <col className="w-[76px]" />
        </colgroup>
        <thead>
          <tr className="h-[31px] text-left align-top text-[#4c607a]">
            <th className="font-normal p-0 relative">
              <div className="h-[26px] pt-[5px] pl-[3px] border-r border-[#eaf0f6]">Name</div>
              <svg viewBox="0 0 7 4" className="absolute left-[124px] top-px w-[7px] h-1" aria-hidden="true">
                <path d="M3.500 0L7 4H0z" fill="#7d9ab8" />
              </svg>
            </th>
            <th className="font-normal p-0"><div className="h-[26px] pt-[5px] pl-[6px] border-r border-[#eaf0f6]">Date modified</div></th>
            <th className="font-normal p-0"><div className="h-[26px] pt-[5px] pl-[6px] border-r border-[#eaf0f6]">Type</div></th>
            <th className="font-normal p-0"><div className="h-[26px] pt-[5px] pl-[6px] border-r border-[#eaf0f6]">Size</div></th>
          </tr>
        </thead>
        <tbody>
          {files.map((f) => (
            <tr key={f.name} className={`h-[21px] ${f.hover ? 'bg-linear-to-b from-[#fafdff] to-[#e6f3fb] outline outline-[#c3dcec] -outline-offset-1' : ''}`}>
              <td className="p-0 pl-1">
                <span className="flex items-center gap-1 whitespace-nowrap text-[#111]">
                  {f.icon}
                  {f.name}
                </span>
              </td>
              <td className="p-0 pl-[5px] whitespace-nowrap text-[#6d6d6d]">{f.date}</td>
              <td className="p-0 pl-[6px] whitespace-nowrap text-[#6d6d6d]">{f.type}</td>
              <td className="p-0 pr-1 text-right text-[#6d6d6d]">{f.size}</td>
            </tr>
          ))}
        </tbody>
      </table>
    </div>
  );
}

function StatusBar() {
  return (
    <footer className="flex items-center h-[25px] pl-[11px] pr-2 text-[11px] leading-4 text-[#2c3a52]">
      <span className="w-[49px]">8 items</span>
      <span className="w-px h-[19px] bg-[#8c939c]" />
      <span className="w-[168px] pl-[13px] whitespace-nowrap">Library includes: 2 locations</span>
      <span className="w-px h-[19px] bg-[#8c939c]" />
      <button aria-label="Details view" className="ml-auto mr-[3px] flex items-center justify-center w-[22px] h-[21px] border border-[#c8ccd2] bg-[#eceef1] rounded-xs">
        <Svg>
          <path d="M2 3h2M2 6.500h2M2 10h2M2 13.500h2" stroke="#5a6b7c" strokeWidth="1.500" />
          <path d="M6 3h4M11 3h4M6 6.500h4M11 6.500h4M6 10h4M11 10h4M6 13.500h4M11 13.500h4" stroke="#6d7a88" />
          <path d="M5 1v14" stroke="#8c98a5" strokeDasharray="1 1" />
        </Svg>
      </button>
      <button aria-label="Large icons view">
        <Svg box={14} className="size-[14px]">
          <rect x=".5" y="1.500" width="13" height="11" fill="#fff" stroke="#6a7f94" />
          <rect x="2" y="3" width="10" height="6" fill="#a7d6ea" />
          <path d="M2 7c3-2 5 1 10 1v3H2z" fill="#24566f" />
        </Svg>
      </button>
    </footer>
  );
}

function ExplorerWindow() {
  return (
    <main className="absolute left-[125px] right-[105px] top-[75px] bottom-[57px] flex flex-col border border-[#26384f] bg-linear-to-r from-[#b9dbe6] to-[#859fc2] shadow-[0_2px_10px_2px_rgba(0,20,50,0.75)]">
      <div className="flex flex-col flex-1 min-h-0 border border-[#dcebf5] px-[3px] pb-[2px]">
        <TitleBar />
        <RibbonTabs />
        <Ribbon />
        <AddressRow />
        <div className="flex flex-col flex-1 min-h-0 bg-[#fcfdfe]">
          <div className="flex flex-1 min-h-0">
            <NavPane />
            <FileList />
          </div>
          <StatusBar />
        </div>
      </div>
    </main>
  );
}

/* ---------- taskbar ---------- */

function TaskButton({ label, active, children }: { label: string; active?: boolean; children: ReactNode }) {
  return (
    <button
      aria-label={label}
      className={`flex items-center justify-center w-[60px] h-[38px] ${
        active ? 'rounded-xs border border-[#eaf4fb] bg-linear-to-b from-[#c8e0f0] to-[#7fb3d6] shadow-[0_0_0_1px_#3d6484]' : ''
      }`}
    >
      {children}
    </button>
  );
}

function Taskbar() {
  return (
    <footer className="flex items-center h-10 shrink-0 border-t border-[#16324e] inset-shadow-[0_1px_0_#9cc8e4] bg-linear-to-r from-[#7ba5c8] from-5% via-[#3f93c6] via-45% to-[#1f4a7c] to-82%">
      <button aria-label="Start" className="flex items-center justify-center w-[54px] h-full bg-[#332f30]">
        <StartLogo />
      </button>
      <div className="flex gap-[2px] ml-[6px]">
        <TaskButton label="Internet Explorer"><IeLogo /></TaskButton>
        <TaskButton label="r3dfox" active><FoxTask /></TaskButton>
        <TaskButton label="Windows Explorer" active><ExplorerTask /></TaskButton>
        <TaskButton label="Media Player"><PlayerTask /></TaskButton>
        <TaskButton label="Supermium"><SupermiumTask /></TaskButton>
        <TaskButton label="FCEUX" active><FceuxTask /></TaskButton>
      </div>
      <div className="ml-auto flex items-center h-full text-white">
        <button aria-label="Show hidden icons" className="mr-[13px]">
          <Svg box={8} className="size-2"><path d="M0 6h8L4 2z" fill="#fff" /></Svg>
        </button>
        <div className="flex items-center gap-2">
          <Svg>
            <rect x="5.500" y="3.500" width="10" height="7.500" stroke="#fff" strokeWidth="1.400" />
            <path d="M7 14.300h7M10.500 11v3" stroke="#fff" strokeWidth="1.400" />
            <path d="M1 1v3c0 1.500 3 1.500 3 0V1M2.500 5v8.500H6" stroke="#fff" strokeWidth="1.200" />
          </Svg>
          <Svg>
            <path d="M1.500 1v14" stroke="#fff" strokeWidth="1.300" />
            <path d="M3 2c3-1.500 5 1.500 9 0v7c-4 1.500-6-1.500-9 0z" fill="#fff" />
            <circle cx="11" cy="10.500" r="4.500" fill="#d33" />
            <path d="M8.800 8.300l4.400 4.400M13.200 8.300l-4.400 4.400" stroke="#fff" strokeWidth="1.500" />
          </Svg>
          <Svg>
            <path d="M1 5.500h2.500L7.500 2v12l-4-3.500H1z" fill="#fff" />
            <path d="M9.500 5.500c1.300 1.500 1.300 3.500 0 5M11.500 3.500c2.300 2.700 2.300 6.300 0 9M13.500 2c2.600 3.500 2.600 8.500 0 12" stroke="#fff" />
          </Svg>
        </div>
        <time dateTime="2024-12-23T23:04" className="w-[78px] ml-1 text-center text-[11px] leading-4">
          11:04 PM<br />12/23/2024
        </time>
        <button aria-label="Show desktop" className="w-[15px] h-full ml-[-4px] border-l border-[#8fa9c4] bg-linear-to-b from-[#6d8db0] to-[#27496f]" />
      </div>
    </footer>
  );
}

export default function App() {
  return (
    <div className="flex flex-col min-h-screen font-['Noto_Sans','Open_Sans',sans-serif]">
      <div className="relative flex-1 min-h-[728px] overflow-hidden">
        <Wallpaper />
        <DesktopIcons />
        <ExplorerWindow />
        <svg viewBox="0 0 12 20" className="absolute left-[414px] top-[375px] w-3 h-5" aria-hidden="true">
          <path d="M.7 1v15l3.500-3 2.500 6 2.600-1.200L6.800 12h4.500z" fill="#fff" stroke="#222" />
        </svg>
      </div>
      <Taskbar />
    </div>
  );
}
